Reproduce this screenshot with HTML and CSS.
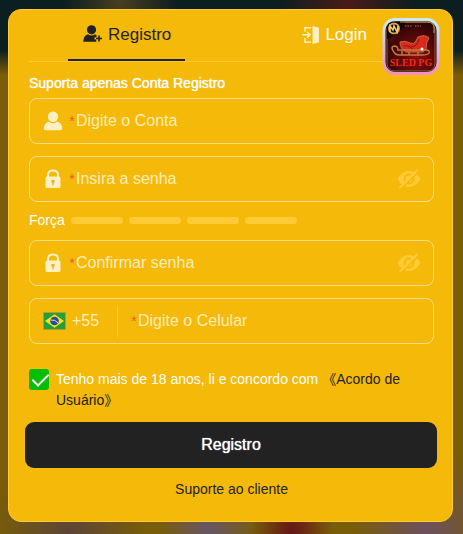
FILE: index.html
```
<!DOCTYPE html>
<html lang="pt-BR">
<head>
  <meta charset="UTF-8" />
  <meta name="viewport" content="width=device-width, initial-scale=1.0">
  <title>Registro</title>
  <link rel="stylesheet" href="styles.css">
</head>
<body>
  <main class="card">
    <nav class="tabs">
      <a href="#registro" class="tab active">
        <svg width="20" height="18" viewBox="0 0 20 18" fill="currentColor">
          <circle cx="8.500" cy="4.800" r="4.600" />
          <path d="M5 9.200Q8.500 11.600 12 9.200L13.600 10.500V12.200H11.500V14.600H13.200V16.700H.3C.3 12.600 2 10.300 5 9.200Z" />
          <path d="M15.200 10.400H16.800V12.700H19V14.300H16.800V16.600H15.200V14.300H13V12.700H15.200Z" />
        </svg>
        Registro
      </a>
      <a href="#login" class="tab">
        <svg width="18" height="20" viewBox="0 0 18 20" fill="#fff0c2">
          <path d="M10.500 1L17 2.800V17.200L10.500 19Z" />
          <path d="M3 6.500V2.700H9M3 13V17.200H9" fill="none" stroke="#fff0c2" stroke-width="1.500" />
          <path d="M0 9.800H7M5 7L8 9.800L5 12.600" fill="none" stroke="#fff0c2" stroke-width="1.500" />
        </svg>
        Login
      </a>
    </nav>

    <svg class="logo" viewBox="0 0 58 58" role="img" aria-label="SLED PG">
      <defs>
        <linearGradient id="rim" x1="0" y1="0" x2="0" y2="1">
          <stop offset="0" stop-color="#c9eaff" />
          <stop offset="1" stop-color="#f08fc8" />
        </linearGradient>
        <radialGradient id="red" cx=".6" cy=".7" r=".7">
          <stop offset="0" stop-color="#8c0d0c" />
          <stop offset="1" stop-color="#2c0506" />
        </radialGradient>
      </defs>
      <rect x="2" y="1.500" width="54" height="54" rx="11" fill="#160405" stroke="url(#rim)" stroke-width="3" />
      <rect x="5" y="4" width="48" height="49" rx="7" fill="url(#red)" stroke="#96663a" />
      <path d="M5 18V10Q5 4 11 4H24L20 10Q18 16 5 21Z" fill="#0d0708" />
      <path d="M18 4H46Q52 4 52 10V15" fill="none" stroke="#c99a4a" />
      <circle cx="12" cy="10.500" r="5" fill="none" stroke="#d9a441" stroke-width="2" />
      <path d="M8 14V8L11 12L12 8L15 14L16 8" fill="none" stroke="#f3cd6c" stroke-width="1.500" />
      <path d="M23 8H30M33 8H39" stroke="#8d7a70" stroke-dasharray="1.500 1" />
      <path d="M9 24L14 17M42 27L49 17" stroke="#4d090a" stroke-width="4" />
      <path d="M18 24Q23 22 28 25Q32 27 34 23L36 19Q43 16 47 20Q44 24 44 31L41 34H24Q18 31 18 24Z" fill="#d92a1e" stroke="#c06a3d" />
      <path d="M29 29Q35 29 37 21M22 28Q28 27 31 32" fill="none" stroke="#8d1110" />
      <path d="M12 34Q8 29 12 28Q16 28 16 32H44Q48 32 47 35Q46 37 40 37H18Q13 37 12 34M20 33V37M27 34V37M36 34V37" fill="none" stroke="#b87d45" stroke-width="1.500" />
      <circle cx="40" cy="31" r="1.500" fill="#fff" />
      <text x="29" y="48" text-anchor="middle" class="logo-text">SLED PG</text>
    </svg>

    <form>
      <p class="hint">Suporta apenas Conta Registro</p>

      <div class="field">
        <label class="field-icon" for="conta" aria-label="Conta">
          <svg width="20" height="20" viewBox="0 0 20 20" fill="#fff0c2">
            <circle cx="10" cy="5.800" r="5.200" />
            <path d="M5.500 10.600Q10 14 14.500 10.600Q19 12.500 19.200 17.500Q19.200 19.300 17.500 19.300H2.500Q.8 19.300 .8 17.500Q1 12.500 5.500 10.600Z" />
          </svg>
        </label>
        <span class="required">*</span>
        <input type="text" id="conta" placeholder="Digite o Conta">
      </div>

      <div class="field">
        <label class="field-icon" for="senha" aria-label="Senha">
          <svg width="20" height="20" viewBox="0 0 20 20" fill="#fff0c2">
            <path d="M5 9V6Q5 1.500 10 1.500T15 6V9" fill="none" stroke="#fff0c2" stroke-width="2" />
            <rect x="2.500" y="7.500" width="15" height="11.500" rx="1.500" />
            <path d="M8.400 11H11.600V13.500H10.700V16.300H9.300V13.500H8.400Z" fill="#e0b040" />
          </svg>
        </label>
        <span class="required">*</span>
        <input type="password" id="senha" placeholder="Insira a senha">
        <button type="button" class="eye" aria-label="Mostrar senha">
          <svg width="24" height="20" viewBox="0 0 24 20">
            <path d="M.5 10Q5 2 12 2T23.500 10Q19 18 12 18T.5 10Z" fill="#ffca33" />
            <circle cx="12" cy="10" r="4.500" fill="none" stroke="#f5b909" stroke-width="1.800" />
            <path d="M4 20L22 2.500" stroke="#f5b909" stroke-width="1.500" />
            <path d="M2.500 19L20.500 1" stroke="#ffca33" stroke-width="2" />
          </svg>
        </button>
      </div>

      <div class="strength">
        <span>Força</span>
        <span class="bar"></span>
        <span class="bar"></span>
        <span class="bar"></span>
        <span class="bar"></span>
      </div>

      <div class="field">
        <label class="field-icon" for="confirmar" aria-label="Confirmar senha">
          <svg width="20" height="20" viewBox="0 0 20 20" fill="#fff0c2">
            <path d="M5 9V6Q5 1.500 10 1.500T15 6V9" fill="none" stroke="#fff0c2" stroke-width="2" />
            <rect x="2.500" y="7.500" width="15" height="11.500" rx="1.500" />
            <path d="M8.400 11H11.600V13.500H10.700V16.300H9.300V13.500H8.400Z" fill="#e0b040" />
          </svg>
        </label>
        <span class="required">*</span>
        <input type="password" id="confirmar" placeholder="Confirmar senha">
        <button type="button" class="eye" aria-label="Mostrar senha">
          <svg width="24" height="20" viewBox="0 0 24 20">
            <path d="M.5 10Q5 2 12 2T23.500 10Q19 18 12 18T.5 10Z" fill="#ffca33" />
            <circle cx="12" cy="10" r="4.500" fill="none" stroke="#f5b909" stroke-width="1.800" />
            <path d="M4 20L22 2.500" stroke="#f5b909" stroke-width="1.500" />
            <path d="M2.500 19L20.500 1" stroke="#ffca33" stroke-width="2" />
          </svg>
        </button>
      </div>

      <div class="field">
        <label class="country" for="celular">
          <svg width="23" height="18" viewBox="0 0 23 18">
            <rect width="23" height="18" fill="#c69a10" />
            <rect x="1" y="1" width="21" height="16" fill="#229e45" />
            <path d="M2 9L11.500 2.200L21 9L11.500 15.800Z" fill="#f8e509" />
            <circle cx="11.500" cy="9" r="4.300" fill="#2b49a3" />
            <path d="M7.500 8Q12 7.300 15.300 11" fill="none" stroke="#d5e4ee" />
          </svg>
          +55
        </label>
        <span class="required">*</span>
        <input type="tel" id="celular" placeholder="Digite o Celular">
      </div>

      <div class="agree">
        <input type="checkbox" id="agree" checked>
        <p>
          <label for="agree">Tenho mais de 18 anos, li e concordo com</label>
          <a href="#acordo">《Acordo de Usuário》</a>
        </p>
      </div>

      <button type="submit" class="submit">Registro</button>
    </form>

    <a href="#suporte" class="support">Suporte ao cliente</a>
  </main>
</body>
</html>
```
FILE: styles.css
```
* {
  box-sizing: border-box;
}
body {
  margin: 0;
  padding: 9px 10px 12px 8px;
  min-height: 100vh;
  font-family: "Liberation Sans", "Noto Sans CJK SC", sans-serif;
  font-size: 14px;
  color: #fff;
  /* dimmed, blurred lobby behind the dialog */
  background:
    radial-gradient(ellipse at 26% 0, #493d20 0, transparent 12%),
    radial-gradient(ellipse at 75% 0, #4a1b18 0, transparent 14%),
    radial-gradient(ellipse at 15% 100%, #5c4537 0, transparent 14%),
    radial-gradient(ellipse at 45% 100%, #665565 0, transparent 14%),
    radial-gradient(ellipse at 63% 100%, #641515 0, transparent 10%),
    radial-gradient(ellipse at 92% 100%, #6b5060 0, transparent 12%),
    linear-gradient(#0b1e20 0, #0b1e20 50px, #795d08 75px);
}
a {
  color: #222;
  text-decoration: none;
}
.card {
  position: relative;
  padding: 0 18px 22px 20px;
  background-color: #f5b909;
  border: 1px solid #ffca33;
  border-radius: 13px;
}
.tabs {
  display: flex;
  justify-content: space-between;
  height: 52px;
  padding: 0 53px 0 39px;
  border-bottom: 1px solid #ffca33;
}
.tab {
  display: flex;
  gap: 5px;
  height: 51px;
  padding: 15px 14px 0 15px;
  font-size: 17px;
  line-height: 20px;
  color: #fff;
}
.tab.active {
  color: #222;
  border-bottom: 2px solid #222;
}
.logo {
  position: absolute;
  top: 8px;
  right: 12px;
  width: 58px;
  height: 58px;
}
.logo-text {
  font-family: "Liberation Serif", serif;
  font-size: 10px;
  font-weight: bold;
  fill: #f0291c;
}
.hint {
  margin: 11px 0 5px;
  line-height: 20px;
}
.hint,
.submit {
  text-shadow: 0 0 1px #fff;
}
.field {
  display: flex;
  align-items: center;
  height: 46px;
  margin-bottom: 12px;
  padding: 0 12px 0 13px;
  border: 1px solid #fadc83;
  border-radius: 8px;
}
.field-icon {
  display: flex;
  width: 25px;
}
.required {
  width: 8px;
  font-size: 14px;
  text-align: center;
  color: #ea5a35;
}
.field input {
  flex: 1;
  min-width: 0;
  padding: 0;
  border: none;
  outline: none;
  background: none;
  color: #fff;
  font: 16px "Liberation Sans", sans-serif;
}
.field input::placeholder {
  color: #ffedb8;
}
.eye {
  display: flex;
  padding: 0;
  border: none;
  background: none;
  cursor: pointer;
}
.country {
  display: flex;
  align-items: center;
  gap: 6px;
  width: 75px;
  height: 32px;
  margin-right: 12px;
  border-right: 1px solid #ffca33;
  font-size: 16px;
  color: #ffedb8;
}
.strength {
  display: flex;
  align-items: center;
  gap: 6px;
  height: 36px;
  margin: -12px 0 2px;
}
.bar {
  width: 52px;
  height: 7px;
  border-radius: 4px;
  background-color: #ffca33;
}
.agree {
  display: flex;
  gap: 7px;
  margin: 25px 0 11px;
  line-height: 21px;
}
.agree p {
  margin: 0;
}
.agree input {
  appearance: none;
  position: relative;
  flex: none;
  width: 20px;
  height: 21px;
  margin: 0;
  border-radius: 3px;
  background-color: #04be02;
}
.agree input:checked::after {
  content: "";
  position: absolute;
  top: 1px;
  left: 7px;
  width: 7px;
  height: 14px;
  border: solid #fff;
  border-width: 0 2px 2px 0;
  transform: rotate(45deg);
}
.submit {
  display: block;
  width: calc(100% + 7px);
  height: 46px;
  margin: 0 -3px 0 -4px;
  border: none;
  border-radius: 9px;
  background-color: #222;
  color: #fff;
  font: 16px "Liberation Sans", sans-serif;
  cursor: pointer;
}
.support {
  display: block;
  margin-top: 11px;
  line-height: 20px;
  text-align: center;
}
```
